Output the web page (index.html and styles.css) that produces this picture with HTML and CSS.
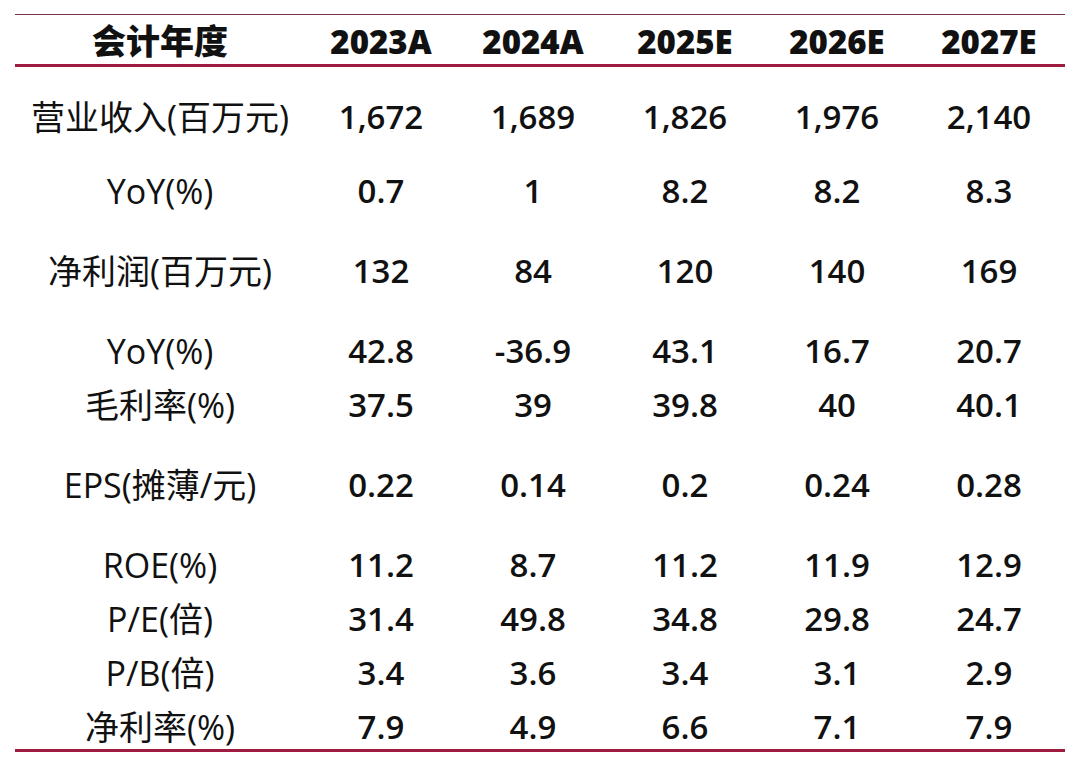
FILE: index.html
```html
<!DOCTYPE html>
<html lang="zh-CN">
<head>
<meta charset="utf-8">
<link rel="stylesheet" href="styles.css">
</head>
<body>
<div class="sheet">
  <div class="row head">
    <div class="cell label">会计年度</div>
    <div class="cell">2023A</div>
    <div class="cell">2024A</div>
    <div class="cell">2025E</div>
    <div class="cell">2026E</div>
    <div class="cell">2027E</div>
  </div>
  <div class="body">
    <div class="row first">
      <div class="cell label">营业收入(百万元)</div>
      <div class="cell">1,672</div><div class="cell">1,689</div><div class="cell">1,826</div><div class="cell">1,976</div><div class="cell">2,140</div>
    </div>
    <div class="row mid">
      <div class="cell label">YoY(%)</div>
      <div class="cell">0.7</div><div class="cell">1</div><div class="cell">8.2</div><div class="cell">8.2</div><div class="cell">8.3</div>
    </div>
    <div class="row gap">
      <div class="cell label">净利润(百万元)</div>
      <div class="cell">132</div><div class="cell">84</div><div class="cell">120</div><div class="cell">140</div><div class="cell">169</div>
    </div>
    <div class="row gap">
      <div class="cell label">YoY(%)</div>
      <div class="cell">42.8</div><div class="cell">-36.9</div><div class="cell">43.1</div><div class="cell">16.7</div><div class="cell">20.7</div>
    </div>
    <div class="row">
      <div class="cell label">毛利率(%)</div>
      <div class="cell">37.5</div><div class="cell">39</div><div class="cell">39.8</div><div class="cell">40</div><div class="cell">40.1</div>
    </div>
    <div class="row gap">
      <div class="cell label">EPS(摊薄/元)</div>
      <div class="cell">0.22</div><div class="cell">0.14</div><div class="cell">0.2</div><div class="cell">0.24</div><div class="cell">0.28</div>
    </div>
    <div class="row gap">
      <div class="cell label">ROE(%)</div>
      <div class="cell">11.2</div><div class="cell">8.7</div><div class="cell">11.2</div><div class="cell">11.9</div><div class="cell">12.9</div>
    </div>
    <div class="row">
      <div class="cell label">P/E(倍)</div>
      <div class="cell">31.4</div><div class="cell">49.8</div><div class="cell">34.8</div><div class="cell">29.8</div><div class="cell">24.7</div>
    </div>
    <div class="row">
      <div class="cell label">P/B(倍)</div>
      <div class="cell">3.4</div><div class="cell">3.6</div><div class="cell">3.4</div><div class="cell">3.1</div><div class="cell">2.9</div>
    </div>
    <div class="row">
      <div class="cell label">净利率(%)</div>
      <div class="cell">7.9</div><div class="cell">4.9</div><div class="cell">6.6</div><div class="cell">7.1</div><div class="cell">7.9</div>
    </div>
  </div>
</div>
</body>
</html>
```
FILE: styles.css
```css
html, body {
  margin: 0;
  padding: 0;
  background: #ffffff;
}
body {
  font-family: "Open Sans", "Noto Sans CJK SC", "Noto Sans", sans-serif;
  color: #111111;
}
.sheet {
  width: 1050px;
  margin: 14px 0 0 15px;
  border-top: 1px solid #7a3448;
}
.row {
  display: grid;
  grid-template-columns: 290px repeat(5, 152px);
  height: 54px;
  align-items: center;
  font-size: 33px;
  font-weight: 600;
  line-height: 54px;
}
.cell {
  text-align: center;
  white-space: nowrap;
}
.row .label {
  font-size: 34px;
  font-weight: 400;
}
.head {
  height: 45px;
  padding-top: 4px;
  line-height: 45px;
  font-weight: 800;
  border-bottom: 3px solid #a01b40;
}
.head .label {
  font-weight: 800;
}
.body {
  padding-top: 23px;
  border-bottom: 3px solid #a01b40;
  height: 685px;
  box-sizing: border-box;
}
.mid { margin-top: 20px; }
.gap { margin-top: 26px; }
```
